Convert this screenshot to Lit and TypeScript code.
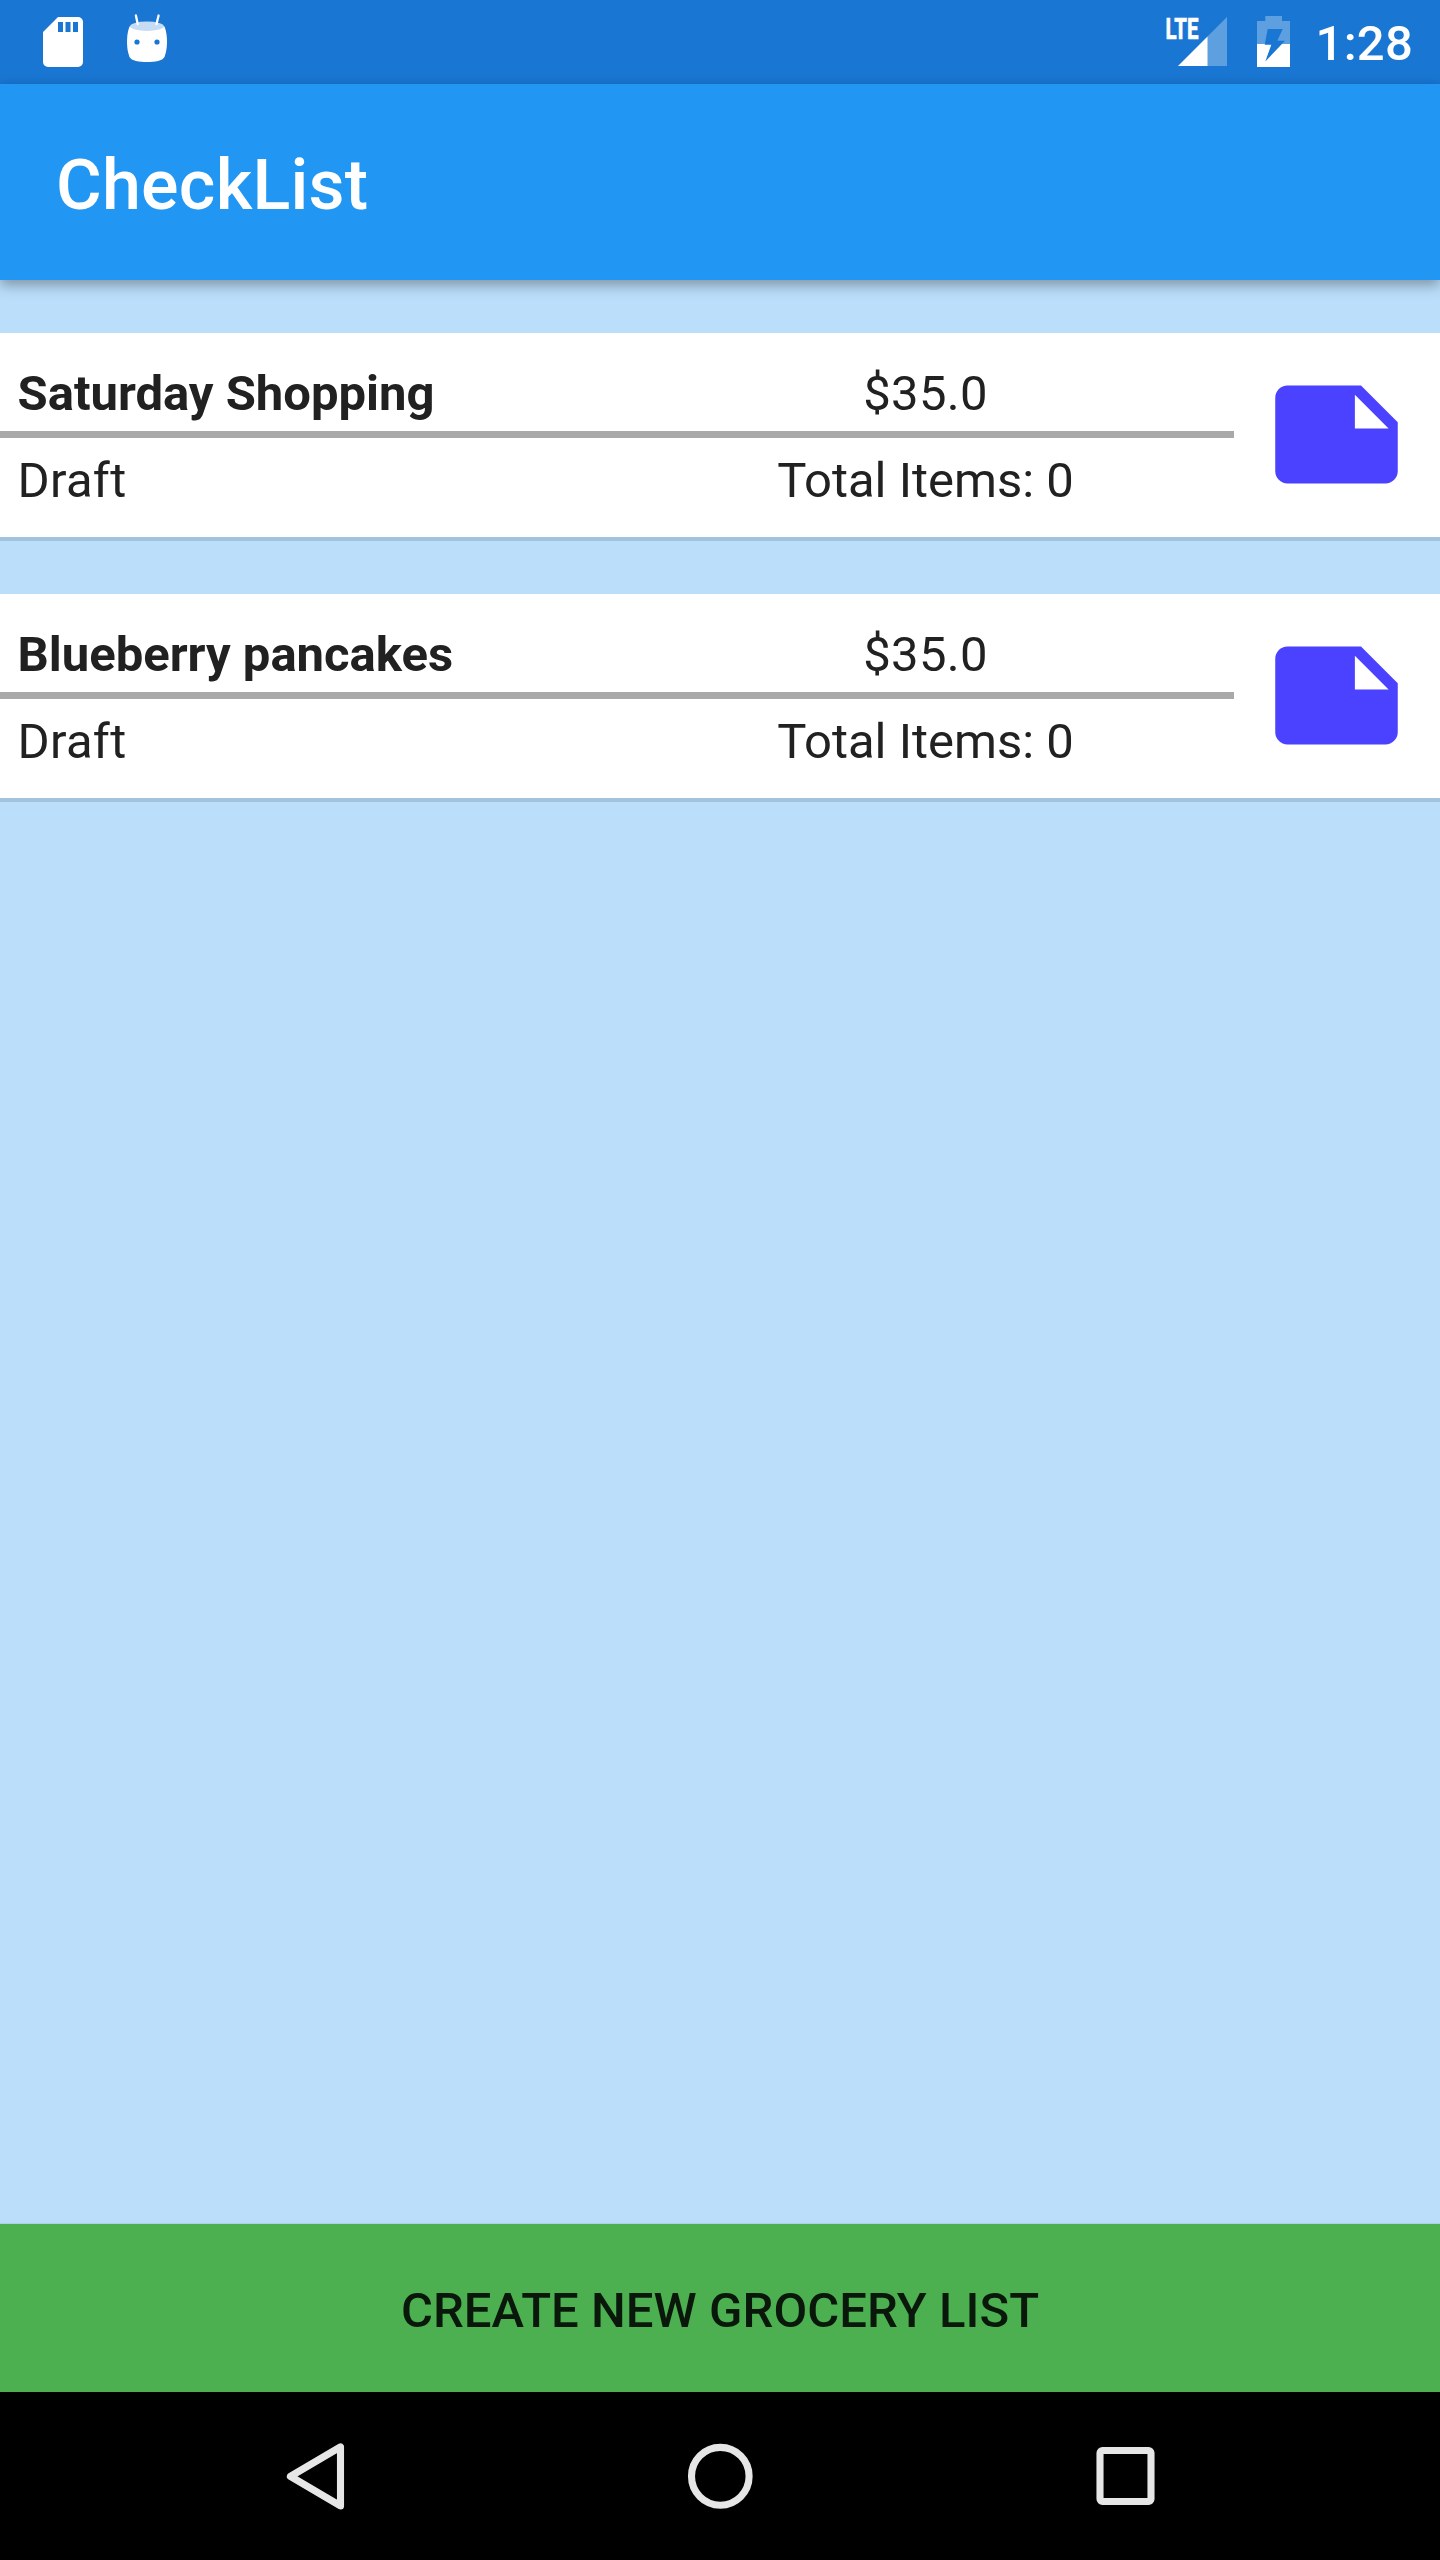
import { LitElement, html, css, svg } from "lit";
import { customElement, property } from "lit/decorators.js";

interface GroceryList {
  name: string;
  price: string;
  status: string;
  items: number;
}

const lists: GroceryList[] = [
  { name: "Saturday Shopping", price: "$35.0", status: "Draft", items: 0 },
  { name: "Blueberry pancakes", price: "$35.0", status: "Draft", items: 0 },
];

@customElement("status-bar")
class StatusBar extends LitElement {
  static styles = css`
    :host {
      display: flex;
      justify-content: space-between;
      height: 84px;
      box-sizing: border-box;
      padding-left: 33px;
      background: #1976d2;
      color: #fff;
      font-family: Roboto, sans-serif;
    }
    .group {
      display: flex;
    }
    .notifications {
      gap: 24px;
    }
    svg {
      display: block;
      flex: none;
    }
    .lte {
      font-family: Roboto, sans-serif;
      font-weight: 700;
      font-size: 29.5px;
      stroke: #fff;
      stroke-width: 0.7px;
    }
    .clock {
      box-sizing: border-box;
      width: 143px;
      padding: 15px 0 0 18.5px;
      font-weight: 500;
      font-size: 49px;
      line-height: 58px;
      letter-spacing: 0.3px;
    }
    .battery {
      margin-left: 18px;
    }
  `;

  render() {
    return html`
      <div class="group notifications">
        <svg width="60" height="84" viewBox="33 0 60 84">
          <path
            fill="#fff"
            fill-rule="evenodd"
            d="M58 17H78a5 5 0 0 1 5 5V62a5 5 0 0 1-5 5H48a5 5 0 0 1-5-5V32ZM58 22V32H63V22ZM65.5 22V32H70.5V22ZM73 22V32H78V22Z"
          />
        </svg>
        <svg width="60" height="84" viewBox="117 0 60 84">
          <path
            fill="#fff"
            d="M130 26C128 29 127 36 127 42C127 48 128 53 129.5 57C131.5 61 139 62 147 62C155 62 162.500 61 164.500 57C166 53 167 48 167 42C167 36 166 29 164 26Z"
          />
          <ellipse cx="147" cy="26.200" rx="17" ry="4.700" fill="#c6dcf4" />
          <path
            d="M135.900 15.500L137.700 24M158.600 15.500L156.500 24"
            stroke="#fff"
            stroke-width="2.300"
            stroke-linecap="round"
          />
          <circle cx="137" cy="42" r="2.600" fill="#1976d2" />
          <circle cx="157" cy="42" r="2.600" fill="#1976d2" />
        </svg>
      </div>
      <div class="group">
        <svg width="72" height="84" viewBox="1160 0 72 84">
          <path fill="#5e9fe0" d="M1207 66V37L1227 17V66Z" />
          <path fill="#fff" d="M1178 66L1207.500 36.500V66Z" />
          <text
            class="lte"
            x="1165.500"
            y="39"
            fill="#fff"
            textLength="33"
            lengthAdjust="spacingAndGlyphs"
          >LTE</text>
        </svg>
        <svg class="battery" width="47" height="84" viewBox="1250 0 47 84">
          <path fill="#5e9fe0" d="M1257 44V21H1265.300V16H1282V21H1290V44Z" />
          <path fill="#fff" d="M1257 44H1290V67H1257Z" />
          <path
            fill="#1976d2"
            d="M1267.700 29H1282.700L1277.300 40.700H1285L1265.300 61.500L1271.300 44.700H1264.700Z"
          />
        </svg>
        <div class="clock">1:28</div>
      </div>
    `;
  }
}

@customElement("list-card")
class ListCard extends LitElement {
  @property({ attribute: false }) list!: GroceryList;

  static styles = css`
    :host {
      display: grid;
      grid-template-columns: 1234px 1fr;
      align-items: start;
      height: 204px;
      background: #fff;
      border-bottom: 4px solid #a3c2dc;
      color: #212121;
      font-family: Roboto, sans-serif;
      font-size: 49px;
      line-height: 58px;
    }
    .details {
      padding-top: 32px;
    }
    .row {
      display: grid;
      grid-template-columns: 1fr 1fr;
    }
    .row.top {
      padding-bottom: 8px;
      border-bottom: 7px solid #a9a9a9;
    }
    .row.bottom {
      padding-top: 14px;
    }
    .start {
      padding-left: 17.5px;
    }
    .name {
      font-weight: 700;
    }
    .price,
    .status {
      letter-spacing: 0.3px;
    }
    .middle {
      text-align: center;
    }
    .icon {
      display: block;
      margin: 28px 0 0 29px;
    }
  `;

  render() {
    const { name, price, status, items } = this.list;
    return html`
      <div class="details">
        <div class="row top">
          <div class="start name">${name}</div>
          <div class="middle price">${price}</div>
        </div>
        <div class="row bottom">
          <div class="start status">${status}</div>
          <div class="middle">Total Items: ${items}</div>
        </div>
      </div>
      <svg class="icon" width="147" height="147" viewBox="0 0 24 24">
        <path
          fill="#4b42ff"
          d="M22 10l-6-6H4c-1.100 0-2 .9-2 2v12.010c0 1.100.9 1.990 2 1.990l16-.01c1.100 0 2-.89 2-1.990v-8zm-7-4.500l5.500 5.500H15V5.500z"
        />
      </svg>
    `;
  }
}

@customElement("nav-bar")
class NavBar extends LitElement {
  static styles = css`
    :host {
      display: flex;
      justify-content: center;
      align-items: center;
      gap: 321px;
      height: 168px;
      background: #000;
    }
    svg {
      display: block;
    }
  `;

  render() {
    const shapes = [
      svg`<path d="M67.500 18.900V77.900L17.400 48.400Z" />`,
      svg`<ellipse cx="42.300" cy="48.300" rx="28.800" ry="28.900" />`,
      svg`<rect x="17" y="22.500" width="51" height="51" rx="2.500" />`,
    ];
    return shapes.map(
      (shape) => html`<svg
        width="84"
        height="96"
        viewBox="0 0 84 96"
        fill="none"
        stroke="#e6e6e6"
        stroke-width="7.100"
        stroke-linejoin="round"
      >${shape}</svg>`
    );
  }
}

@customElement("app-root")
class AppRoot extends LitElement {
  static styles = css`
    :host {
      display: flex;
      flex-direction: column;
      height: 2560px;
      background: #bbdefb;
      font-family: Roboto, sans-serif;
    }
    status-bar,
    nav-bar,
    .app-bar,
    .create {
      flex: none;
    }
    .app-bar {
      display: flex;
      align-items: center;
      height: 196px;
      box-sizing: border-box;
      padding: 6px 56px 0;
      background: #2196f3;
      color: #fff;
      font-size: 70px;
      font-weight: 500;
      line-height: 82px;
      letter-spacing: 0.25px;
      box-shadow: 0 5px 13px rgba(0, 0, 0, 0.34);
    }
    .lists {
      flex: 1;
      display: flex;
      flex-direction: column;
      gap: 53px;
      padding-top: 53px;
    }
    .create {
      height: 168px;
      border: 0;
      padding: 5px 0 0;
      background: #4caf50;
      color: #0a180b;
      font-family: Roboto, sans-serif;
      font-size: 49px;
      font-weight: 500;
      line-height: 58px;
      letter-spacing: 0.06px;
      text-transform: uppercase;
      box-shadow: 0 -1px 1px rgba(0, 0, 0, 0.06);
    }
  `;

  render() {
    return html`
      <status-bar></status-bar>
      <header class="app-bar">CheckList</header>
      <main class="lists">
        ${lists.map((list) => html`<list-card .list=${list}></list-card>`)}
      </main>
      <button class="create">Create new grocery list</button>
      <nav-bar></nav-bar>
    `;
  }
}
